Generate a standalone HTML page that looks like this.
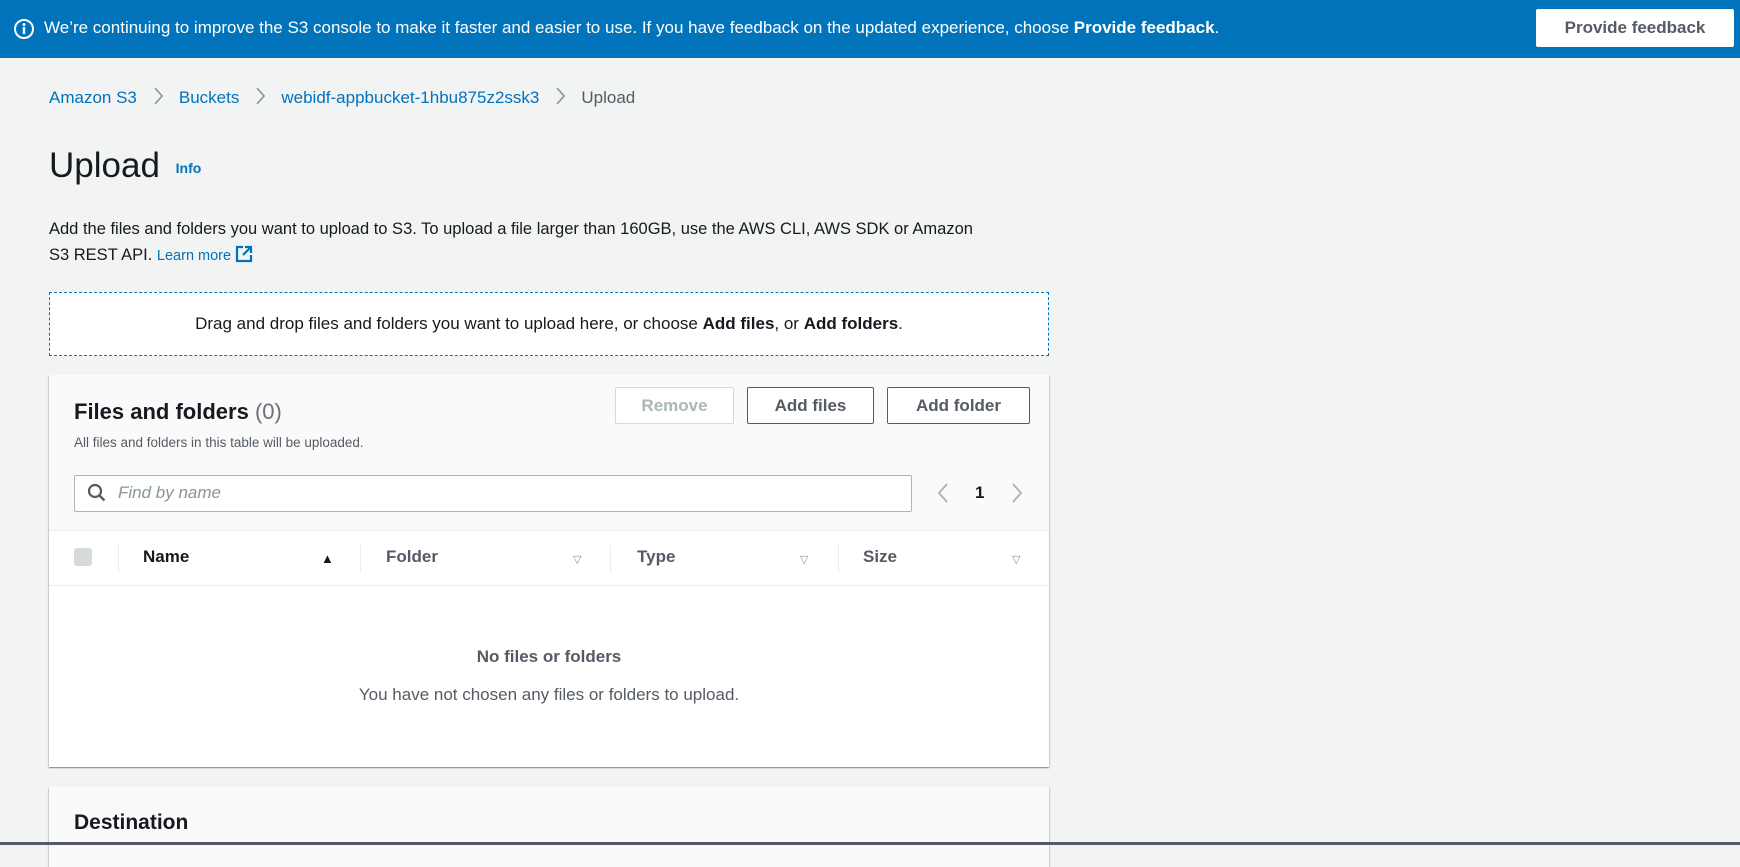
<!DOCTYPE html>
<html><head><meta charset="utf-8"><style>
*{box-sizing:border-box;margin:0;padding:0}
body{width:1740px;height:845px;overflow:hidden;background:#f2f3f3;font-family:"Liberation Sans",sans-serif;color:#16191f;position:relative}
.abs{position:absolute}
.banner{left:0;top:0;width:1740px;height:58px;background:#0073bb;color:#fff;font-size:17px;font-weight:bold}
.btn{position:absolute;border:1px solid #545b64;background:#fff;color:#545b64;font-weight:bold;font-size:17px;display:flex;align-items:center;justify-content:center;border-radius:2px}
a{color:#0073bb;text-decoration:none}
.panel{background:#fff;box-shadow:0 1px 1px 0 rgba(0,28,36,.3),1px 1px 1px 0 rgba(0,28,36,.15),-1px 1px 1px 0 rgba(0,28,36,.15)}
.th{position:absolute;top:547px;font-size:17px;font-weight:bold}
.sep{position:absolute;top:545px;width:1px;height:28px;background:#eaeded}
.tri{position:absolute;top:553px;font-size:11px;color:#879596}
.chev{margin:0 16px 0 17px;vertical-align:-2px}
</style></head><body>
<div class="abs banner">
 <svg class="abs" style="left:13px;top:18px" width="22" height="22" viewBox="0 0 22 22"><circle cx="11" cy="11" r="9" fill="none" stroke="#fff" stroke-width="2"/><circle cx="11" cy="6.5" r="1.5" fill="#fff"/><rect x="9.8" y="9" width="2.4" height="7" fill="#fff"/></svg>
 <div class="abs" style="left:44px;top:18px;white-space:nowrap"><span style="font-weight:normal">We’re continuing to improve the S3 console to make it faster and easier to use. If you have feedback on the updated experience, choose </span>Provide feedback<span style="font-weight:normal">.</span></div>
 <div class="btn" style="left:1536px;top:9px;width:198px;height:38px;border-color:#fff">Provide feedback</div>
</div>
<div class="abs" style="left:49px;top:87px;font-size:17px;color:#545b64;white-space:nowrap"><a>Amazon S3</a><svg class="chev" width="9" height="18" viewBox="0 0 9 18"><path d="M1 1l7 8-7 8" fill="none" stroke="#879596" stroke-width="1.6"/></svg><a>Buckets</a><svg class="chev" width="9" height="18" viewBox="0 0 9 18"><path d="M1 1l7 8-7 8" fill="none" stroke="#879596" stroke-width="1.6"/></svg><a>webidf-appbucket-1hbu875z2ssk3</a><svg class="chev" width="9" height="18" viewBox="0 0 9 18"><path d="M1 1l7 8-7 8" fill="none" stroke="#879596" stroke-width="1.6"/></svg>Upload</div>
<div class="abs" style="left:49px;top:146px;font-size:35px">Upload <a style="font-size:14px;font-weight:bold;vertical-align:middle;margin-left:6px">Info</a></div>
<div class="abs" style="left:49px;top:216px;width:1010px;font-size:16.5px;line-height:26px">Add the files and folders you want to upload to S3. To upload a file larger than 160GB, use the AWS CLI, AWS SDK or Amazon<br>S3 REST API. <a style="font-size:14.5px">Learn more <svg width="18" height="18" viewBox="0 0 18 18" style="vertical-align:-3px"><path d="M8 2H2v14h14v-6" fill="none" stroke="#0073bb" stroke-width="2.2"/><path d="M10 2h6v6M16 2l-8 8" fill="none" stroke="#0073bb" stroke-width="2.2"/></svg></a></div>
<div class="abs" style="left:49px;top:292px;width:1000px;height:64px;border:1px dashed #0073bb;background:#fff;display:flex;align-items:center;justify-content:center;font-size:17px">Drag and drop files and folders you want to upload here, or choose&nbsp;<b>Add files</b>, or&nbsp;<b>Add folders</b>.</div>
<div class="abs panel" style="left:49px;top:375px;width:1000px;height:392px"></div>
<div class="abs" style="left:49px;top:375px;width:1000px;height:155px;background:#fafafa"></div>
<div class="abs" style="left:74px;top:399px;font-size:22px;font-weight:bold">Files and folders <span style="font-weight:normal;color:#687078">(0)</span></div>
<div class="abs" style="left:74px;top:435px;font-size:13.5px;color:#545b64">All files and folders in this table will be uploaded.</div>
<div class="btn" style="left:615px;top:387px;width:119px;height:37px;border-color:#d5dbdb;color:#aab7b8">Remove</div>
<div class="btn" style="left:747px;top:387px;width:127px;height:37px">Add files</div>
<div class="btn" style="left:887px;top:387px;width:143px;height:37px">Add folder</div>
<div class="abs" style="left:74px;top:475px;width:838px;height:37px;border:1px solid #aab7b8;background:#fff;border-radius:2px"></div>
<svg class="abs" style="left:87px;top:483px" width="20" height="20" viewBox="0 0 20 20"><circle cx="8" cy="8" r="6" fill="none" stroke="#545b64" stroke-width="2.2"/><path d="M12.5 12.5l5 5" stroke="#545b64" stroke-width="2.4"/></svg>
<div class="abs" style="left:118px;top:483px;font-size:17px;font-style:italic;color:#879596">Find by name</div>
<svg class="abs" style="left:936px;top:482px" width="14" height="22"><path d="M11 2L3 11l8 9" fill="none" stroke="#aab7b8" stroke-width="2"/></svg>
<div class="abs" style="left:975px;top:483px;font-size:17px;font-weight:bold">1</div>
<svg class="abs" style="left:1010px;top:482px" width="14" height="22"><path d="M3 2l8 9-8 9" fill="none" stroke="#aab7b8" stroke-width="2"/></svg>
<div class="abs" style="left:49px;top:530px;width:1000px;height:1px;background:#eaeded"></div>
<div class="abs" style="left:49px;top:585px;width:1000px;height:1px;background:#eaeded"></div>
<div class="abs" style="left:74px;top:548px;width:18px;height:18px;background:#d5dbdb;border-radius:3px"></div>
<div class="sep" style="left:118px"></div><div class="sep" style="left:360px"></div><div class="sep" style="left:610px"></div><div class="sep" style="left:838px"></div>
<div class="th" style="left:143px">Name</div><div class="abs" style="left:321px;top:551px;font-size:13px">▲</div>
<div class="th" style="left:386px;color:#545b64">Folder</div><div class="tri" style="left:573px">▽</div>
<div class="th" style="left:637px;color:#545b64">Type</div><div class="tri" style="left:800px">▽</div>
<div class="th" style="left:863px;color:#545b64">Size</div><div class="tri" style="left:1012px">▽</div>
<div class="abs" style="left:49px;top:647px;width:1000px;text-align:center;font-size:17px;font-weight:bold;color:#545b64">No files or folders</div>
<div class="abs" style="left:49px;top:685px;width:1000px;text-align:center;font-size:17px;color:#545b64">You have not chosen any files or folders to upload.</div>
<div class="abs panel" style="left:49px;top:787px;width:1000px;height:80px;background:#fafafa"></div>
<div class="abs" style="left:74px;top:811px;font-size:21px;font-weight:bold">Destination</div>
<div class="abs" style="left:0;top:842px;width:1740px;height:3px;background:#545b64"></div>
</body></html>
